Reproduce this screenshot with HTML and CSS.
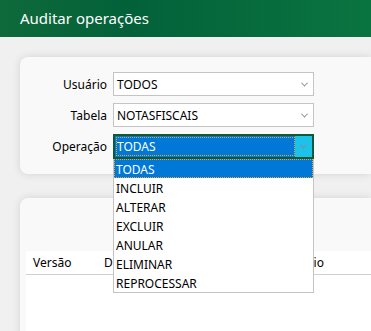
FILE: index.html
```html
<!DOCTYPE html>
<html lang="pt-BR">
<head>
  <meta charset="UTF-8">
  <title>Auditar operações</title>
  <link rel="stylesheet" href="styles.css">
</head>
<body>
  <div class="titlebar">Auditar operações</div>

  <div class="page">
    <div class="card filters">
      <div class="field">
        <label>Usuário</label>
        <div class="combo"><span class="value">TODOS</span><span class="arrow"></span></div>
      </div>
      <div class="field">
        <label>Tabela</label>
        <div class="combo"><span class="value">NOTASFISCAIS</span><span class="arrow"></span></div>
      </div>
      <div class="field">
        <label>Operação</label>
        <div class="combo-wrap">
          <div class="combo focused">
            <span class="value"><span class="focus-rect">TODAS</span></span>
            <span class="arrow"></span>
          </div>
          <!-- open dropdown list -->
          <ul class="dropdown">
            <li class="selected">TODAS</li>
            <li>INCLUIR</li>
            <li>ALTERAR</li>
            <li>EXCLUIR</li>
            <li>ANULAR</li>
            <li>ELIMINAR</li>
            <li>REPROCESSAR</li>
          </ul>
        </div>
      </div>
    </div>

    <div class="card results">
      <div class="grid">
        <div class="grid-head">
          <span class="col-versao">Versão</span>
          <span class="col-data">D</span>
          <span class="col-user">Usuário</span>
        </div>
      </div>
    </div>
  </div>
</body>
</html>
```

FILE: styles.css
```css
body {
  margin: 0;
  background: #f0f0f0;
  font-family: "Noto Sans", sans-serif;
  font-size: 12px;
  color: #000;
  overflow: hidden;
  height: 331px;
}

.titlebar {
  height: 37px;
  line-height: 37px;
  padding-left: 20px;
  color: #fff;
  font-size: 15px;
  background: linear-gradient(90deg, #0e6a3a 0%, #03613a 35%, #0a7440 100%);
}

/* window is narrower than the form, so cards run off the edges */
.page {
  padding: 20px 0 0 20px;
  height: 274px;
  overflow: hidden;
}

.card {
  width: 351px;
  margin-right: -10px;
  background: #f9f9f9;
  border-radius: 8px 0 0 8px;
  box-shadow: 0 0 8px rgba(0, 0, 0, 0.12);
}

/* Filters */
.filters {
  height: 117px;
  box-sizing: border-box;
  padding-top: 15px;
  display: flex;
  flex-direction: column;
  gap: 7px;
}
.field {
  display: flex;
  align-items: center;
  gap: 6px;
  height: 24px;
}
.field label {
  width: 87px;
  text-align: right;
}
.combo-wrap {
  position: relative;
}
.combo {
  width: 201px;
  height: 24px;
  box-sizing: border-box;
  border: 1px solid #c4c4c4;
  background: #fff;
  display: flex;
  align-items: center;
}
.combo .value {
  flex: 1;
  padding-left: 3px;
}
.arrow {
  width: 17px;
  height: 100%;
  display: flex;
  align-items: center;
  justify-content: center;
}
.arrow::after {
  content: "";
  width: 4px;
  height: 4px;
  border-right: 1px solid #8a8a8a;
  border-bottom: 1px solid #8a8a8a;
  transform: rotate(45deg) translate(-1px, -1px);
}
.combo.focused {
  border: 2px solid #0f5a35;
  height: 25px;
}
.combo.focused .value {
  padding: 1px 0 1px 1px;
  height: 100%;
  box-sizing: border-box;
  background: #0078d7;
  display: flex;
}
.focus-rect {
  flex: 1;
  color: #fff;
  outline: 1px dotted #f0a030;
  outline-offset: -1px;
  padding-left: 1px;
  display: flex;
  align-items: center;
}
.combo.focused .arrow {
  background: #1cc2ea;
}

.dropdown {
  position: absolute;
  top: 25px;
  left: 0;
  width: 201px;
  box-sizing: border-box;
  margin: 0;
  padding: 0;
  list-style: none;
  background: #fff;
  border: 1px solid #c4c4c4;
  border-top: none;
  z-index: 10;
}
.dropdown li {
  height: 18px;
  padding-top: 1px;
  line-height: 19px;
  padding-left: 2px;
}
.dropdown li.selected {
  background: #0078d7;
  color: #fff;
  outline: 1px dotted #f0a030;
  outline-offset: -1px;
}

/* Results */
.results {
  margin-top: 24px;
  height: 200px;
  padding: 53px 0 0 6px;
  box-sizing: border-box;
}
.grid {
  background: #fff;
  height: 100%;
}
.grid-head {
  display: grid;
  grid-template-columns: 71px 176px 1fr;
  height: 23px;
  align-items: center;
  border-bottom: 1px solid #cfcfcf;
}
.grid-head span {
  padding-left: 7px;
}
```
